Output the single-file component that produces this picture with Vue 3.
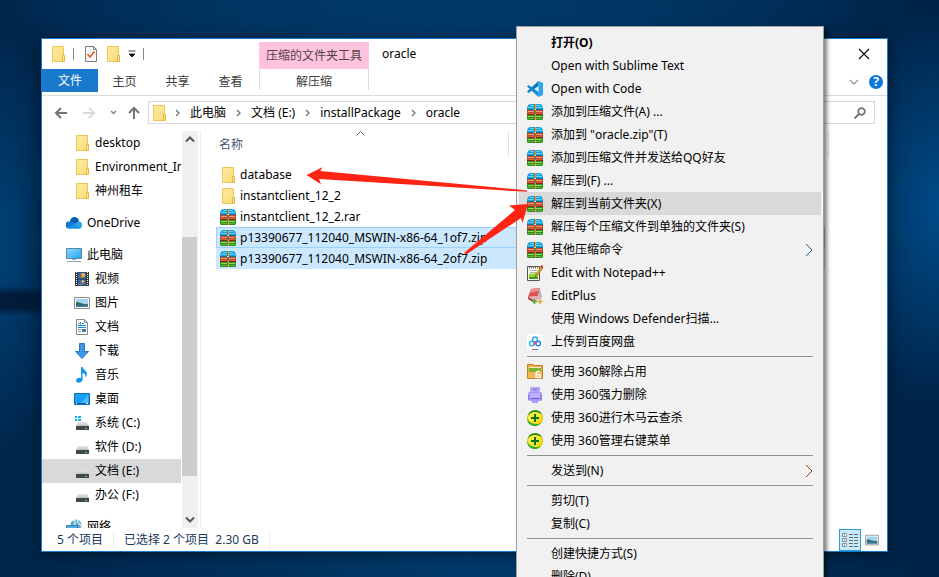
<script setup>
import { ref } from 'vue';

const ribbonTabs = ['主页', '共享', '查看'];
const crumbs = ['此电脑', '文档 (E:)', 'installPackage', 'oracle'];

const groups = [
  {
    items: [
      { icon: 'folder', label: 'desktop', nested: true },
      { icon: 'folder', label: 'Environment_Ins', nested: true },
      { icon: 'folder', label: '神州租车', nested: true },
    ],
  },
  { items: [{ icon: 'cloud', label: 'OneDrive' }] },
  {
    items: [
      { icon: 'pc', label: '此电脑' },
      { icon: 'video', label: '视频', nested: true },
      { icon: 'picture', label: '图片', nested: true },
      { icon: 'doc', label: '文档', nested: true },
      { icon: 'download', label: '下载', nested: true },
      { icon: 'music', label: '音乐', nested: true },
      { icon: 'desktop', label: '桌面', nested: true },
      { icon: 'sysdrive', label: '系统 (C:)', nested: true },
      { icon: 'drive', label: '软件 (D:)', nested: true },
      { icon: 'drive', label: '文档 (E:)', nested: true },
      { icon: 'drive', label: '办公 (F:)', nested: true },
    ],
  },
  { items: [{ icon: 'network', label: '网络' }] },
];
const current = ref('文档 (E:)');

const files = [
  { icon: 'folder', name: 'database' },
  { icon: 'folder', name: 'instantclient_12_2' },
  { icon: 'zip', name: 'instantclient_12_2.rar' },
  { icon: 'zip', name: 'p13390677_112040_MSWIN-x86-64_1of7.zip' },
  { icon: 'zip', name: 'p13390677_112040_MSWIN-x86-64_2of7.zip' },
];
const selected = ref([3, 4]);
const focused = ref(3);

function selectFile(i) {
  selected.value = [i];
  focused.value = i;
}

const menu = [
  [
    { label: '打开(O)', bold: true },
    { label: 'Open with Sublime Text' },
    { label: 'Open with Code', icon: 'vscode' },
    { label: '添加到压缩文件(A) ...', icon: 'zip' },
    { label: '添加到 "oracle.zip"(T)', icon: 'zip' },
    { label: '添加到压缩文件并发送给QQ好友', icon: 'zip' },
    { label: '解压到(F) ...', icon: 'zip' },
    { label: '解压到当前文件夹(X)', icon: 'zip', active: true },
    { label: '解压每个压缩文件到单独的文件夹(S)', icon: 'zip' },
    { label: '其他压缩命令', icon: 'zip', sub: 'blue' },
    { label: 'Edit with Notepad++', icon: 'notepad' },
    { label: 'EditPlus', icon: 'editplus' },
    { label: '使用 Windows Defender扫描...' },
    { label: '上传到百度网盘', icon: 'baidu' },
  ],
  [
    { label: '使用 360解除占用', icon: 'unlock' },
    { label: '使用 360强力删除', icon: 'shred' },
    { label: '使用 360进行木马云查杀', icon: 'safe' },
    { label: '使用 360管理右键菜单', icon: 'safe' },
  ],
  [{ label: '发送到(N)', sub: 'brown' }],
  [{ label: '剪切(T)' }, { label: '复制(C)' }],
  [{ label: '创建快捷方式(S)' }, { label: '删除(D)' }],
];
</script>

<template>
  <div class="desktop">
    <svg class="sprite" aria-hidden="true">
      <defs>
        <linearGradient id="gFolder" x1="0" y1="0" x2="1" y2="1">
          <stop offset="0" stop-color="#ffe9a2" /><stop offset="1" stop-color="#fbdc7c" />
        </linearGradient>
        <linearGradient id="gPc" x1="0" y1="0" x2="1" y2="1">
          <stop offset="0" stop-color="#8bdcff" /><stop offset="1" stop-color="#23a3f0" />
        </linearGradient>
        <linearGradient id="gSafe" x1="0" y1="0" x2="1" y2="1">
          <stop offset="0" stop-color="#fffb60" /><stop offset="1" stop-color="#f7cf00" />
        </linearGradient>
        <linearGradient id="gDrive" x1="0" y1="0" x2="0" y2="1">
          <stop offset="0" stop-color="#e6e7e9" /><stop offset="1" stop-color="#bfc2c5" />
        </linearGradient>
      </defs>
      <symbol id="folder" viewBox="0 0 16 16">
        <path d="M2.500.5h11v15h-11z" fill="url(#gFolder)" stroke="#ecc955" />
        <path d="M12.500 9.500h2v6h-2z" fill="#ffe79a" stroke="#e3b93d" />
      </symbol>
      <symbol id="zip" viewBox="0 0 16 16">
        <path d="M3 0h10l2 1 1 3v2H0V4l1-3z" fill="#18a0dc" />
        <path d="M3 1h10v1H3zM1 3h14v1H1z" fill="#5fd0f5" />
        <path d="M0 5h16v1H0z" fill="#0e74a8" />
        <path d="M0 6h16v5H0z" fill="#c04a2c" />
        <path d="M1 7h14v1H1z" fill="#ee9a74" />
        <path d="M1 9h14v1H1z" fill="#d8603f" />
        <path d="M0 10h16v1H0z" fill="#8a2616" />
        <path d="M0 11h16v4l-1 1H1l-1-1z" fill="#2f8f1e" />
        <path d="M1 12h14v1H1z" fill="#8fe04f" />
        <path d="M1 14h14v1H1z" fill="#58b934" />
        <path d="M7 0h2v16H7z" fill="#8c6a35" />
        <path d="M8 0h1v5H8zM8 10h1v6H8z" fill="#c9a35c" />
        <path d="M7 5h2v1H7z" fill="#f3d774" />
      </symbol>
      <symbol id="cloud" viewBox="0 0 16 16">
        <path d="M4 7a4.500 4.500 0 0 1 9-1l-3 4-7 1z" fill="#0a5db5" />
        <path d="M3 13.500a3.300 3.300 0 0 1 0-7q3-1 6 2l-4 5z" fill="#1278d0" />
        <path d="M3 13.500 9 8.500l4-2c4 0 4 6.500.5 7z" fill="#2aa3ec" />
        <path d="M1 12.500 8 9.500l7 3q-.5 1-2 1H3q-1.500 0-2-1z" fill="#1b93e3" />
      </symbol>
      <symbol id="pc" viewBox="0 0 16 16">
        <path d="M.5 1.500h15v10H.5z" fill="url(#gPc)" stroke="#5d86a1" />
        <path d="M6 12h4v1H6z" fill="#9ab" />
        <path d="M1 14.500h14" stroke="#8fa5b5" />
      </symbol>
      <symbol id="video" viewBox="0 0 16 16">
        <path d="M1 1h14v14H1z" fill="#35363a" />
        <path d="M4 1.500h8v6H4zM4 8.500h8v6H4z" fill="#3467b8" />
        <path d="M2.500 1v14M13.500 1v14" stroke="#eee" stroke-dasharray="1 1" />
        <path d="M5 6h4l2 1H5zM6 12l3 2H5z" fill="#56a139" />
        <circle cx="9" cy="4" r="2" fill="#f0c230" /><circle cx="9" cy="10.500" r="1.500" fill="#f0c230" />
        <path d="M6 4h2v2H6zM9 11h2v2H9z" fill="#c64b3b" />
      </symbol>
      <symbol id="picture" viewBox="0 0 16 16">
        <path d="M.5 2.500h15v11H.5z" fill="#fff" stroke="#8c8c8c" />
        <path d="M2 4h12v8H2z" fill="#a3d3f2" />
        <path d="M2 7c4 0 6 3 12 2v3H2z" fill="#37694f" />
        <path d="M2 10h12v2H2z" fill="#3f74a1" />
      </symbol>
      <symbol id="doc" viewBox="0 0 16 16">
        <path d="M2.500.5h8l3 3v12h-11z" fill="#fff" stroke="#8a8a8a" />
        <path d="M10.500.5v3h3" fill="none" stroke="#8a8a8a" />
        <path d="M4 5.500 6.500 3v2.500M8 4.500h2M4 8.500h8M4 6.500h8" stroke="#1e8ad6" fill="none" />
        <path d="M4 10.500h3M4 12.500h3" stroke="#7b98ac" /><path d="M8 10h4v3H8z" fill="#3e7ba4" />
      </symbol>
      <symbol id="download" viewBox="0 0 16 16">
        <path d="M5.500.5h5v8h4L8 15.500 1.500 8.500h4z" fill="#3f95e5" stroke="#2376c6" />
      </symbol>
      <symbol id="music" viewBox="0 0 16 16">
        <path d="M7 0h1.500c.5 3 4.500 3.500 4.500 7 0 1.500-.5 2.500-1.500 3.500.5-3-1-4-3-4.500v6.500c0 4-6.500 4-6.500 1 0-2 2.500-3.500 5-2.500z" fill="#1595ea" />
      </symbol>
      <symbol id="desktop" viewBox="0 0 16 16">
        <path d="M.5 2.500h15v11H.5z" fill="#17a1fa" stroke="#0d6db5" />
        <path d="M7 12 14 4v8z" fill="#4dbafc" />
        <path d="M1 12.500h14" stroke="#0b5c9b" /><path d="M2 12.500h1M12 12.500h2" stroke="#d8f0ff" />
      </symbol>
      <symbol id="drive" viewBox="0 0 16 16">
        <path d="M4 7h9l2 4H2z" fill="url(#gDrive)" />
        <path d="M2 11h13v4H2z" fill="#44484b" />
        <path d="M11 13h2v1h-2z" fill="#3fe060" />
      </symbol>
      <symbol id="sysdrive" viewBox="0 0 16 16">
        <path d="M1 1h2v2H1zM4 1h3v2H4zM1 4h2v2H1zM4 4h3v2H4z" fill="#10b2e6" />
        <path d="M4 7h9l2 4H2z" fill="url(#gDrive)" />
        <path d="M2 11h13v4H2z" fill="#44484b" />
        <path d="M11 13h2v1h-2z" fill="#3fe060" />
      </symbol>
      <symbol id="network" viewBox="0 0 16 16">
        <circle cx="10" cy="6" r="5.500" fill="#5ba6cd" />
        <path d="M7 2c3-1 3 2 1 4s2 2 1 4M12 1c-2 3 2 3 3 6" fill="none" stroke="#c7e8f5" stroke-width="1.500" />
        <path d="M.5 6.500h11v7H.5z" fill="#43aef0" stroke="#447ca0" />
        <path d="M3 15.500h7" stroke="#8fa5b5" />
      </symbol>
      <symbol id="vscode" viewBox="0 0 16 16">
        <path d="M11.500 0 16 2v12l-4.500 2z" fill="#2aa7f2" />
        <path d="M11.500 0v5L1.500 12 0 10.500z" fill="#0b78c3" />
        <path d="M0 5.500 1.500 4l10 7v5z" fill="#128bdb" />
      </symbol>
      <symbol id="notepad" viewBox="0 0 16 16">
        <path d="M.5 1.500h12v14H.5z" fill="#fbfbf5" stroke="#55564c" />
        <path d="M2 2.500h10" stroke="#666" stroke-dasharray="1 1" stroke-width="2" />
        <path d="M3 5.500h7M3 7.500h6" stroke="#b5b5b5" />
        <path d="M2 9c3-1 6 0 9-2v7H2z" fill="#94d72f" /><path d="M2 12h9v2H2z" fill="#3f9c2b" />
        <path d="m13.500 2-6 10 3-1.500L16 3z" fill="#e9a521" stroke="#6d4b18" stroke-width=".5" />
        <path d="m13.500 1 1.500-1 1 1v2l-2.500-1z" fill="#d12f25" />
      </symbol>
      <symbol id="editplus" viewBox="0 0 16 16">
        <path d="m4 1 9-1-2 8-10 1z" fill="#dc5055" /><path d="m4 1 9-1-1 3-9 2z" fill="#ee8d8a" />
        <path d="m1 9 10-1 2 3-7 2z" fill="#e9a9a9" /><path d="m1 9 5 3v2L1 11z" fill="#99393c" />
        <path d="m13 0 2 10-1 1-3-3z" fill="#b9b5b5" />
        <path d="M5 13.500h5M7.500 11v5" stroke="#3faa31" stroke-width="1.500" />
        <path d="M10.500 13.500h5M13 11v5" stroke="#d9b02c" stroke-width="1.500" />
      </symbol>
      <symbol id="baidu" viewBox="0 0 16 16">
        <rect width="16" height="16" rx="3" fill="#fff" />
        <g fill="none" stroke-width="1.500">
          <circle cx="8" cy="5.500" r="2.500" stroke="#3ba5f5" />
          <circle cx="4.800" cy="9.500" r="2.300" stroke="#27b7f3" />
          <circle cx="11.200" cy="9.500" r="2.300" stroke="#2c80f0" />
          <path d="m6.500 11 3-3.500" stroke="#f04866" />
        </g>
        <path d="M5 15.500h3" stroke="#f04866" /><path d="M8 15.500h3" stroke="#3485f3" />
      </symbol>
      <symbol id="unlock" viewBox="0 0 16 16">
        <path d="M.5.500h6l1 1h8v13H.5z" fill="#f2ab45" stroke="#c88025" />
        <path d="M2 4h12v4H2z" fill="#76b82e" /><path d="M2 3.500h12" stroke="#f9edcd" />
        <path d="M1 8h14v6H1z" fill="#f5b655" />
        <path d="M13 7.500c-2.500-1-4 0-4 3M9 10.500h4v3H9z" fill="none" stroke="#fff" stroke-width="1.300" />
      </symbol>
      <symbol id="shred" viewBox="0 0 16 16">
        <path d="M3 1q0-1 1-1h8q1 0 1 1v6H3z" fill="#b3a7fa" />
        <path d="M6 1.500h4v2H6z" fill="#8f80e8" />
        <rect x="1" y="5" width="14" height="9" rx="2" fill="#a598fb" />
        <path d="M1 8h2v5H1zM13 8h2v5h-2z" fill="#9485f4" />
        <path d="M3 6h10v5H3z" fill="#bcb1ff" />
        <path d="M4 11h8v1H4z" fill="#6a57cf" /><path d="M5 13h6v3H5z" fill="#a99dfa" />
      </symbol>
      <symbol id="safe" viewBox="0 0 16 16">
        <circle cx="8" cy="8" r="7.500" fill="url(#gSafe)" stroke="#d8c200" />
        <path d="M5 .8C9-.8 13.500.5 15.300 4.500 12.500 2.500 9 1.500 5 2.500 3 3.200 2 4.500 1.200 6 1.300 3.500 3 1.600 5 .8z" fill="#17861b" />
        <path d="M.2 9c2 3.500 6 5.500 11 5 1.500-.3 2.500-1 3.500-2-1.500 3-5 4.500-8.200 3.900C3 15.300.5 13 .2 9z" fill="#2fae2a" />
        <path d="M8 4v8M4 8h8" stroke="#08701d" stroke-width="2" />
      </symbol>
    </svg>

    <main class="window">
      <header class="titlebar">
        <div class="quick">
          <svg class="icon"><use href="#folder" /></svg>
          <i class="tick"></i>
          <svg class="icon" viewBox="0 0 16 16">
            <path d="M2.500.5h8l3 3v12h-11z" fill="#f8f8f8" stroke="#7b7b7b" />
            <path d="M10.500.5v3h3" fill="none" stroke="#7b7b7b" />
            <path d="m4.500 8 2.500 3 4.500-5.500" fill="none" stroke="#e8591c" stroke-width="1.600" />
          </svg>
          <svg class="icon"><use href="#folder" /></svg>
          <svg class="caret" viewBox="0 0 8 8"><path d="M.5 1h7M1 4h6L4 7z" fill="#111" stroke="#111" stroke-width=".8" /></svg>
          <i class="tick"></i>
        </div>
        <span class="context">压缩的文件夹工具</span>
        <h1>oracle</h1>
        <button class="close" aria-label="关闭">
          <svg width="12" height="12" viewBox="0 0 12 12"><path d="m1 1 10 10M11 1 1 11" stroke="#111" stroke-width="1.200" /></svg>
        </button>
      </header>

      <nav class="ribbon">
        <button class="file">文件</button>
        <button v-for="tab in ribbonTabs" :key="tab" class="tab">{{ tab }}</button>
        <button class="tab extract">解压缩</button>
        <svg class="expand" width="10" height="6" viewBox="0 0 10 6"><path d="m1 1 4 4 4-4" fill="none" stroke="#999" stroke-width="1.300" /></svg>
        <button class="help" aria-label="帮助">?</button>
      </nav>

      <div class="location">
        <div class="history">
          <button aria-label="后退"><svg width="14" height="12" viewBox="0 0 14 12"><path d="M13 6H2M7 1 2 6l5 5" fill="none" stroke="#747474" stroke-width="2" /></svg></button>
          <button aria-label="前进"><svg width="14" height="12" viewBox="0 0 14 12"><path d="M1 6h11M7 1l5 5-5 5" fill="none" stroke="#dadada" stroke-width="2" /></svg></button>
          <button aria-label="最近"><svg width="7" height="5" viewBox="0 0 7 5"><path d="m1 1 2.500 2.500L6 1" fill="none" stroke="#858585" stroke-width="1.500" /></svg></button>
          <button aria-label="上移"><svg width="12" height="13" viewBox="0 0 12 13"><path d="M6 13V2M1 7l5-5 5 5" fill="none" stroke="#747474" stroke-width="2" /></svg></button>
        </div>
        <div class="address">
          <svg class="icon"><use href="#folder" /></svg>
          <template v-for="crumb in crumbs" :key="crumb">
            <svg class="sep" viewBox="0 0 5 8"><path d="m1 1 3 3-3 3" fill="none" stroke="#777" stroke-width="1.400" /></svg>
            <a href="#">{{ crumb }}</a>
          </template>
        </div>
        <label class="search">
          <input type="text" aria-label="搜索" />
          <svg width="12" height="12" viewBox="0 0 12 12"><circle cx="7.500" cy="4.500" r="3.300" fill="none" stroke="#6f6f6f" stroke-width="1.700" /><path d="m5 7-4.500 4.500" stroke="#6f6f6f" stroke-width="1.900" /></svg>
        </label>
      </div>

      <div class="body">
        <nav class="tree">
          <div v-for="(group, g) in groups" :key="g" class="group">
            <a
              v-for="item in group.items"
              :key="item.label"
              href="#"
              :class="{ nested: item.nested, current: item.label === current }"
              @click.prevent="current = item.label"
            >
              <svg class="icon"><use :href="'#' + item.icon" /></svg>
              <span>{{ item.label }}</span>
            </a>
          </div>
        </nav>
        <div class="scrollbar">
          <svg viewBox="0 0 16 17"><path d="m4 10.500 4-4 4 4" /></svg>
          <div class="track"><div class="thumb"></div></div>
          <svg viewBox="0 0 16 17"><path d="m4 6.500 4 4 4-4" /></svg>
        </div>
        <section class="files">
          <table>
            <thead>
              <tr>
                <th class="name-col">
                  名称
                  <svg class="sort" viewBox="0 0 9 5"><path d="m.5 4.500 4-4 4 4" fill="none" stroke="#666" /></svg>
                </th>
                <th></th>
              </tr>
            </thead>
            <tbody>
              <tr
                v-for="(file, i) in files"
                :key="file.name"
                :class="{ selected: selected.includes(i), focused: focused === i }"
                @click="selectFile(i)"
              >
                <td colspan="2">
                  <div class="file-name">
                    <svg class="icon"><use :href="'#' + file.icon" /></svg>
                    {{ file.name }}
                  </div>
                </td>
              </tr>
            </tbody>
          </table>
        </section>
      </div>

      <footer class="status">
        <span>5 个项目</span>
        <span>已选择 2 个项目&nbsp; 2.30 GB</span>
        <button class="view on" aria-label="详细信息">
          <svg width="18" height="16" viewBox="0 0 18 16">
            <path d="M1.500 1.500h4v3h-4zM1.500 6.500h4v3h-4zM1.500 11.500h4v3h-4z" fill="#fff" stroke="#8a9199" />
            <path d="M3 3h1M3 8h1M3 13h1" stroke="#1979ca" />
            <path d="M8 2.500h9M8 5.500h9M8 8.500h9M8 11.500h9M8 14.500h9" stroke="#5f6b75" stroke-dasharray="4 1" />
          </svg>
        </button>
        <button class="view" aria-label="大图标"><svg width="14" height="14" viewBox="0 0 16 16"><use href="#picture" /></svg></button>
      </footer>
    </main>

    <div class="menu" role="menu">
      <div v-for="(section, s) in menu" :key="s" class="section">
        <button
          v-for="item in section"
          :key="item.label"
          role="menuitem"
          :class="{ bold: item.bold, active: item.active }"
        >
          <svg class="icon"><use v-if="item.icon" :href="'#' + item.icon" /></svg>
          <span>{{ item.label }}</span>
          <svg v-if="item.sub" class="more" :class="item.sub" viewBox="0 0 8 14"><path d="m1 1 6 6-6 6" /></svg>
        </button>
      </div>
    </div>

    <svg class="arrows" width="939" height="577" viewBox="0 0 939 577" aria-hidden="true">
      <path d="m306.500 175 16-7.800-2.200 3.800 206.700 19.400v1.400L319 179l2 5.200z" />
      <path d="m464 253 51-43-6-4.500 19-1.500-5.500 19-1.500-5-54.500 36.300z" />
    </svg>
  </div>
</template>

<style>
body {
  margin: 0;
}
</style>

<style scoped>
.desktop {
  position: relative;
  height: 100vh;
  overflow: hidden;
  font: 12px/16px "Noto Sans", "Noto Sans CJK SC", sans-serif;
  color: #000;
  background:
    linear-gradient(transparent 286px, #001c3a 294px, #001c3a 308px, transparent 316px) 0 0 / 42px 100% no-repeat,
    radial-gradient(ellipse 110px 200px at 100% 36%, #004b88, transparent),
    radial-gradient(ellipse 460px 90px at 45% 0, #003867, transparent),
    radial-gradient(ellipse 60px 220px at 0 42%, #004277, transparent),
    linear-gradient(90deg, #00254a, #003a6b 50%, #002347);
}
.sprite {
  position: absolute;
  width: 0;
  height: 0;
}
button {
  border: 0;
  padding: 0;
  background: none;
  font: inherit;
  color: inherit;
}
a {
  color: inherit;
  text-decoration: none;
}
svg {
  display: block;
  flex: none;
}
.icon {
  width: 16px;
  height: 16px;
}
.window {
  position: absolute;
  inset: 38px 51px 25px 41px;
  display: flex;
  flex-direction: column;
  border: 1px solid #1979ca;
  background: #fff;
  box-shadow: 0 2px 14px rgba(0, 0, 0, 0.5);
}

.titlebar {
  display: flex;
  height: 30px;
}
.quick {
  display: flex;
  align-items: center;
  gap: 7px;
  width: 209px;
  padding-left: 8px;
}
.tick {
  width: 1px;
  height: 12px;
  background: #888;
}
.quick .tick + .icon {
  margin-left: 2px;
}
.quick .icon + .icon {
  margin-left: -1px;
}
.caret {
  width: 8px;
  height: 8px;
}
.context {
  width: 110px;
  margin-top: 3px;
  background: #ffc3dd;
  line-height: 27px;
  text-align: center;
  color: #54424a;
}
h1 {
  flex: 1;
  margin: 0;
  padding-left: 13px;
  font: inherit;
  line-height: 30px;
}
.close {
  width: 46px;
  display: grid;
  place-items: center;
}

.ribbon {
  display: flex;
  align-items: center;
  height: 26px;
  padding-right: 4px;
  border-bottom: 1px solid #dadbdc;
  color: #3b3b3b;
}
.ribbon .file {
  align-self: flex-start;
  width: 56px;
  height: 23px;
  background: #1979ca;
  color: #fff;
}
.tab {
  width: 53px;
}
.extract {
  width: 110px;
  height: 20px;
  margin: 0 auto 4px 2px;
  padding-top: 4px;
  border: solid #dadbdc;
  border-width: 0 1px;
}
.expand {
  margin-right: 10px;
}
.help {
  width: 14px;
  height: 14px;
  border-radius: 50%;
  background: #0a78d7;
  color: #fff;
  font-weight: bold;
  line-height: 14px;
}

.location {
  display: flex;
  gap: 12px;
  padding: 5px 12px 7px 12px;
}
.history {
  display: flex;
  align-items: center;
  gap: 14px;
  width: 94px;
  margin-right: -12px;
}
.history button:nth-child(3) {
  margin-right: -3px;
}
.address,
.search {
  display: flex;
  align-items: center;
  box-sizing: border-box;
  height: 23px;
  border: 1px solid #d9d9d9;
}
.address {
  flex: 1;
  gap: 10px;
  padding-left: 2px;
}
.address .icon {
  margin-right: -2px;
}
.sep {
  width: 5px;
  height: 8px;
}
.search {
  width: 200px;
  padding-right: 8px;
}
.search input {
  flex: 1;
  min-width: 0;
  border: 0;
  outline: 0;
}

.body {
  display: flex;
  flex: 1;
  min-height: 0;
}
.tree {
  width: 139px;
  overflow: hidden;
}
.group {
  margin-bottom: 8px;
}
.tree a {
  display: flex;
  align-items: center;
  gap: 5px;
  height: 24px;
  padding-left: 24px;
  white-space: nowrap;
}
.tree a.nested {
  padding-left: 32px;
}
.tree a.current {
  background: #d9d9d9;
}
.scrollbar {
  display: flex;
  flex-direction: column;
  width: 16px;
  margin-left: 1px;
  background: #f0f0f0;
}
.scrollbar svg {
  height: 17px;
  fill: none;
  stroke: #555;
  stroke-width: 2;
}
.track {
  display: flex;
  flex: 1;
  flex-direction: column;
}
.track::before {
  content: "";
  flex: 89;
}
.track::after {
  content: "";
  flex: 35;
}
.thumb {
  flex: 239;
  margin-right: 1px;
  background: #cdcdcd;
}

.files {
  flex: 1;
  margin-left: 2px;
  padding-left: 15px;
  border-left: 1px solid #f0f0f0;
}
table {
  width: 613px;
  max-width: 100%;
  border-collapse: collapse;
  table-layout: fixed;
}
th {
  position: relative;
  height: 27px;
  padding: 0 0 0 3px;
  border-right: 1px solid #e5e5e5;
  font-weight: normal;
  text-align: left;
  color: #44546e;
}
.name-col {
  width: 289px;
}
.sort {
  position: absolute;
  top: 0;
  left: 140px;
  width: 9px;
  height: 5px;
}
tbody::before {
  content: "";
  display: block;
  height: 6px;
}
td {
  padding: 0;
}
.file-name {
  display: flex;
  align-items: center;
  gap: 4px;
  height: 21px;
  margin-right: 4px;
  padding-left: 4px;
}
.selected .file-name {
  background: #cce8ff;
}
.focused .file-name {
  outline: 1px solid #99d1ff;
  outline-offset: -1px;
}

.status {
  display: flex;
  align-items: center;
  height: 23px;
  padding: 0 4px 0 5px;
  color: #1e395b;
}
.status span {
  padding: 0 10px;
  border-right: 1px solid #eee;
}
.view {
  display: grid;
  place-items: center;
  width: 22px;
  height: 22px;
}
.view.on {
  box-sizing: border-box;
  margin-left: auto;
  border: 1px solid #26a0da;
  background: #cbe8f6;
}

.menu {
  position: absolute;
  top: 26px;
  left: 516px;
  box-sizing: border-box;
  width: 308px;
  padding: 4px 2px;
  border: 1px solid #a0a0a0;
  background: #f1f1f1;
  box-shadow: 3px 3px 4px rgba(0, 0, 0, 0.5);
}
.section + .section::before {
  content: "";
  display: block;
  height: 1px;
  margin: 3px 8px;
  background: #919191;
}
.menu button {
  display: flex;
  align-items: center;
  gap: 8px;
  width: 100%;
  height: 23px;
  padding: 0 8px;
  text-align: left;
}
.menu .bold {
  font-weight: bold;
}
.menu .active {
  background: #d9d9d9;
}
.more {
  width: 8px;
  height: 14px;
  margin-left: auto;
  fill: none;
}
.more.blue {
  stroke: #1c5f94;
}
.more.brown {
  stroke: #8a3f16;
}
.arrows {
  position: absolute;
  top: 0;
  left: 0;
  fill: #ff2413;
  pointer-events: none;
}
</style>
